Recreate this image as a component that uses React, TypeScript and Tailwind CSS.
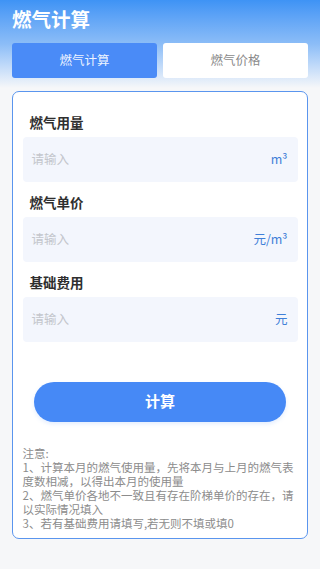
import React from 'react';

const fields = [
  { label: '燃气用量', unit: 'm³' },
  { label: '燃气单价', unit: '元/m³' },
  { label: '基础费用', unit: '元' },
];

const notes = [
  '注意:',
  '1、计算本月的燃气使用量，先将本月与上月的燃气表度数相减，以得出本月的使用量',
  '2、燃气单价各地不一致且有存在阶梯单价的存在，请以实际情况填入',
  '3、若有基础费用请填写,若无则不填或填0',
];

export default function App() {
  return (
    <div className="min-h-screen bg-[#f6f7f9] font-['Noto_Sans_CJK_SC','Noto_Sans',sans-serif]">
      {/* Header */}
      <div className="bg-gradient-to-b from-[#3e93f5] via-[#8cbdf7] to-[#f6f7f9] px-3 pb-[10px]">
        <div className="h-[43px] pt-[7px] text-[19.5px] leading-[23px] font-bold text-white">燃气计算</div>
        <div className="flex gap-[6px] h-[35px]">
          <button className="flex-1 rounded-[3px] bg-[#4a8bf7] text-[12.5px] text-[#eef4ff]">燃气计算</button>
          <button className="flex-1 rounded-[3px] bg-white text-[12.5px] text-[#8a8a8a]">燃气价格</button>
        </div>
      </div>

      {/* Card */}
      <div className="mx-3 mt-[3px] rounded-[7px] border-[1.5px] border-[#5a95ee] bg-white px-[9.5px] pt-[20px] pb-[8px]">
        {fields.map((f, idx) => (
          <div key={idx} className={idx > 0 ? 'mt-[10.5px]' : ''}>
            <div className="h-[20px] pl-[7px] text-[13.5px] leading-[20px] font-bold text-[#2f2f2f]">{f.label}</div>
            <div className="mt-[4.5px] flex h-[45px] items-center justify-between rounded-[4px] bg-[#f3f6fd] pl-[9px] pr-[10px]">
              <span className="text-[12.5px] text-[#c3c6cc]">请输入</span>
              <span className="text-[12.5px] text-[#3f7fd8]">{f.unit}</span>
            </div>
          </div>
        ))}

        <button className="mx-auto mt-[40px] flex h-[40px] w-[252px] items-center justify-center rounded-full bg-[#4689f6] text-[15px] font-bold text-white shadow-[0_2px_4px_rgba(70,137,246,0.15)]">
          计算
        </button>

        <div className="mt-[24px] text-[11.5px] leading-[14px] text-[#8c8c8c]">
          {notes.map((n, idx) => (
            <p key={idx}>{n}</p>
          ))}
        </div>
      </div>
    </div>
  );
}
